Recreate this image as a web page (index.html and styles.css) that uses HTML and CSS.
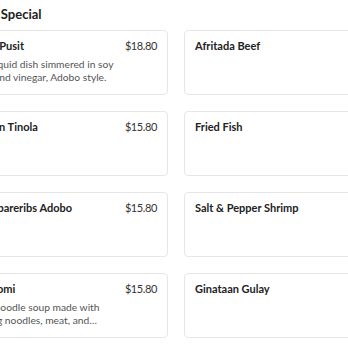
FILE: index.html
```html
<!DOCTYPE html>
<html lang="en">
<head>
<meta charset="utf-8">
<title>Menu</title>
<link rel="stylesheet" href="styles.css">
</head>
<body>
<main class="page">
  <h2 class="section-title">Today's Special</h2>
  <div class="grid">
    <article class="item">
      <div class="item-info">
        <h3 class="item-name">Crispy Pusit</h3>
        <p class="item-desc">Fresh squid dish simmered in soy sauce and vinegar, Adobo style.</p>
      </div>
      <span class="item-price">$18.80</span>
    </article>
    <article class="item">
      <div class="item-info">
        <h3 class="item-name">Afritada Beef</h3>
      </div>
      <span class="item-price">$16.80</span>
    </article>
    <article class="item">
      <div class="item-info">
        <h3 class="item-name">Chicken Tinola</h3>
      </div>
      <span class="item-price">$15.80</span>
    </article>
    <article class="item">
      <div class="item-info">
        <h3 class="item-name">Fried Fish</h3>
      </div>
      <span class="item-price">$15.80</span>
    </article>
    <article class="item">
      <div class="item-info">
        <h3 class="item-name">Pork Spareribs Adobo</h3>
      </div>
      <span class="item-price">$15.80</span>
    </article>
    <article class="item">
      <div class="item-info">
        <h3 class="item-name">Salt &amp; Pepper Shrimp</h3>
      </div>
      <span class="item-price">$17.80</span>
    </article>
    <article class="item">
      <div class="item-info">
        <h3 class="item-name">Pork Lomi</h3>
        <p class="item-desc">A rich noodle soup made with thin egg noodles, meat, and vegetables in a savory broth.</p>
      </div>
      <span class="item-price">$15.80</span>
    </article>
    <article class="item">
      <div class="item-info">
        <h3 class="item-name">Ginataan Gulay</h3>
      </div>
      <span class="item-price">$14.80</span>
    </article>
  </div>
</main>
</body>
</html>
```
FILE: styles.css
```css
* { box-sizing: border-box; }
html, body { margin: 0; padding: 0; background: #ffffff; }
body {
  font-family: Lato, "Noto Sans", sans-serif;
  color: #222222;
}
.page {
  margin-left: -45px;
  width: 442px;
}
.section-title {
  margin: 0;
  padding: 4px 0 0 0;
  font-size: 13px;
  line-height: 20px;
  font-weight: 700;
  color: #222222;
  height: 30px;
}
.grid {
  display: grid;
  grid-template-columns: 213px 213px;
  grid-auto-rows: 65px;
  column-gap: 16px;
  row-gap: 16px;
}
.item {
  display: flex;
  align-items: flex-start;
  gap: 6px;
  border: 1px solid #e6e6e6;
  border-radius: 4px;
  padding: 7px 10px 8px;
  background: #ffffff;
}
.item-info {
  flex: 1;
  min-width: 0;
}
.item-name {
  margin: 0;
  font-size: 11px;
  line-height: 16px;
  font-weight: 700;
  color: #222222;
}
.item-desc {
  margin: 4px 0 0 0;
  font-size: 10.25px;
  line-height: 13px;
  color: #555555;
  display: -webkit-box;
  -webkit-line-clamp: 2;
  -webkit-box-orient: vertical;
  overflow: hidden;
}
.item-price {
  font-size: 11px;
  line-height: 16px;
  letter-spacing: -0.4px;
  color: #333333;
  white-space: nowrap;
}
```
